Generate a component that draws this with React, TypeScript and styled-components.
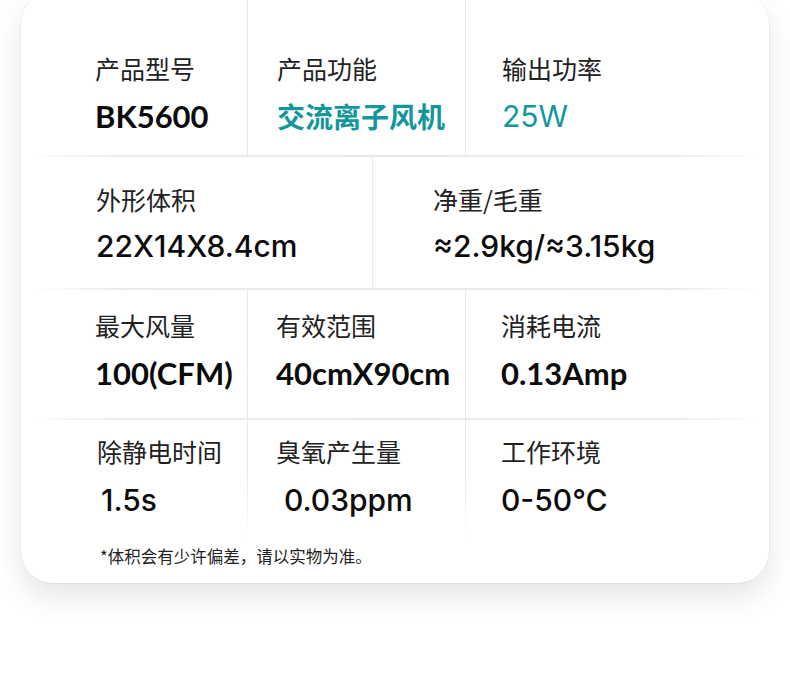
import styled, { createGlobalStyle } from 'styled-components'

const GlobalStyle = createGlobalStyle`
  html, body {
    margin: 0;
    padding: 0;
    background: #ffffff;
  }
  body {
    font-family: 'Noto Sans CJK SC', 'Noto Sans', sans-serif;
    color: #111;
  }
`

type Face = 'lato' | 'inter' | 'cjk'

type Spec = {
  label: string
  value: string
  width?: number
  pad: number
  indent?: number
  accent?: boolean
  face: Face
  light?: boolean
}

type RowSpec = {
  height: number
  top: number
  gap: number
  fade?: boolean
  cells: Spec[]
}

const ROWS: RowSpec[] = [
  {
    height: 163,
    top: 61,
    gap: 15,
    cells: [
      { label: '产品型号', value: 'BK5600', width: 226, pad: 74, face: 'lato' },
      { label: '产品功能', value: '交流离子风机', width: 218, pad: 29, accent: true, face: 'cjk' },
      { label: '输出功率', value: '25W', pad: 36, accent: true, light: true, face: 'inter' },
    ],
  },
  {
    height: 131,
    top: 27,
    gap: 14,
    cells: [
      { label: '外形体积', value: '22X14X8.4cm', width: 351, pad: 75, face: 'inter' },
      { label: '净重/毛重', value: '≈2.9kg/≈3.15kg', pad: 60, face: 'inter' },
    ],
  },
  {
    height: 128,
    top: 20,
    gap: 15,
    cells: [
      { label: '最大风量', value: '100(CFM)', width: 226, pad: 74, face: 'lato' },
      { label: '有效范围', value: '40cmX90cm', width: 218, pad: 28, face: 'lato' },
      { label: '消耗电流', value: '0.13Amp', pad: 35, face: 'lato' },
    ],
  },
  {
    height: 118,
    top: 16,
    gap: 16,
    fade: true,
    cells: [
      { label: '除静电时间', value: '1.5s', width: 226, pad: 76, indent: 4, face: 'inter' },
      { label: '臭氧产生量', value: '0.03ppm', width: 218, pad: 28, indent: 8, face: 'inter' },
      { label: '工作环境', value: '0-50℃', pad: 35, face: 'inter' },
    ],
  },
]

const FACES: Record<Face, string> = {
  lato: "Lato, 'Noto Sans CJK SC', sans-serif",
  inter: "Inter, 'Noto Sans CJK SC', sans-serif",
  cjk: "'Noto Sans CJK SC', sans-serif",
}

const SIZES: Record<Face, number> = {
  lato: 31,
  inter: 30,
  cjk: 28,
}

export default function App() {
  return (
    <>
      <GlobalStyle />
      <Page>
        <Card>
          {ROWS.map((row, i) => (
            <div key={i}>
              {i > 0 && <Divider />}
              <Row $height={row.height}>
                {row.cells.map((c, j) => (
                  <Cell
                    key={c.label}
                    $width={c.width}
                    $pad={c.pad}
                    $top={row.top}
                    $line={j > 0}
                    $fade={row.fade}
                  >
                    <Label>{c.label}</Label>
                    <Value
                      $gap={row.gap}
                      $indent={c.indent ?? 0}
                      $accent={c.accent}
                      $face={c.face}
                      $light={c.light}
                    >
                      {c.value}
                    </Value>
                  </Cell>
                ))}
              </Row>
            </div>
          ))}
          <Note>*体积会有少许偏差，请以实物为准。</Note>
        </Card>
      </Page>
    </>
  )
}

const Page = styled.div`
  width: 790px;
  height: 683px;
  padding-left: 21px;
  box-sizing: border-box;
  overflow: hidden;
`

const Card = styled.div`
  width: 748px;
  margin-top: -8px;
  background: #fff;
  border-radius: 32px;
  box-shadow: 0 0 0 1px rgba(0, 0, 0, 0.04), 0 14px 30px rgba(0, 0, 0, 0.1);
  padding-bottom: 17px;
`

const Row = styled.div<{ $height: number }>`
  display: flex;
  height: ${p => p.$height}px;
`

const Cell = styled.div<{ $width?: number; $pad: number; $top: number; $line: boolean; $fade?: boolean }>`
  ${p => (p.$width ? `width: ${p.$width}px; flex: none;` : 'flex: 1;')}
  box-sizing: border-box;
  padding-left: ${p => p.$pad}px;
  padding-top: ${p => p.$top}px;
  display: flex;
  flex-direction: column;
  border-left: ${p => (p.$line ? '1.5px solid #e9e9e9' : 'none')};
  ${p =>
    p.$line && p.$fade
      ? 'border-image: linear-gradient(to bottom, #e6e6e6 0%, #ececec 60%, rgba(240,240,240,0) 100%) 1;'
      : ''}
`

const Label = styled.div`
  font-family: 'Noto Sans CJK SC', sans-serif;
  font-size: 25px;
  font-weight: 400;
  line-height: 30px;
  color: #222;
  white-space: nowrap;
`

const Value = styled.div<{ $gap: number; $indent: number; $accent?: boolean; $face: Face; $light?: boolean }>`
  margin-top: ${p => p.$gap}px;
  margin-left: ${p => p.$indent}px;
  font-family: ${p => FACES[p.$face]};
  font-size: ${p => SIZES[p.$face]}px;
  font-weight: ${p => (p.$light ? 400 : p.$face === 'inter' ? 500 : 700)};
  line-height: 36px;
  color: ${p => (p.$accent ? '#13979d' : '#0c0c0c')};
  white-space: nowrap;
`

const Divider = styled.div`
  height: 2px;
  margin: 0 10px;
  background: linear-gradient(
    to right,
    rgba(236, 236, 236, 0) 0%,
    #ebebeb 12%,
    #e8e8e8 50%,
    #ebebeb 88%,
    rgba(236, 236, 236, 0) 100%
  );
`

const Note = styled.div`
  margin-top: 8px;
  padding-left: 79px;
  font-family: 'Noto Sans CJK SC', sans-serif;
  font-size: 16.5px;
  line-height: 20px;
  color: #222;
`
